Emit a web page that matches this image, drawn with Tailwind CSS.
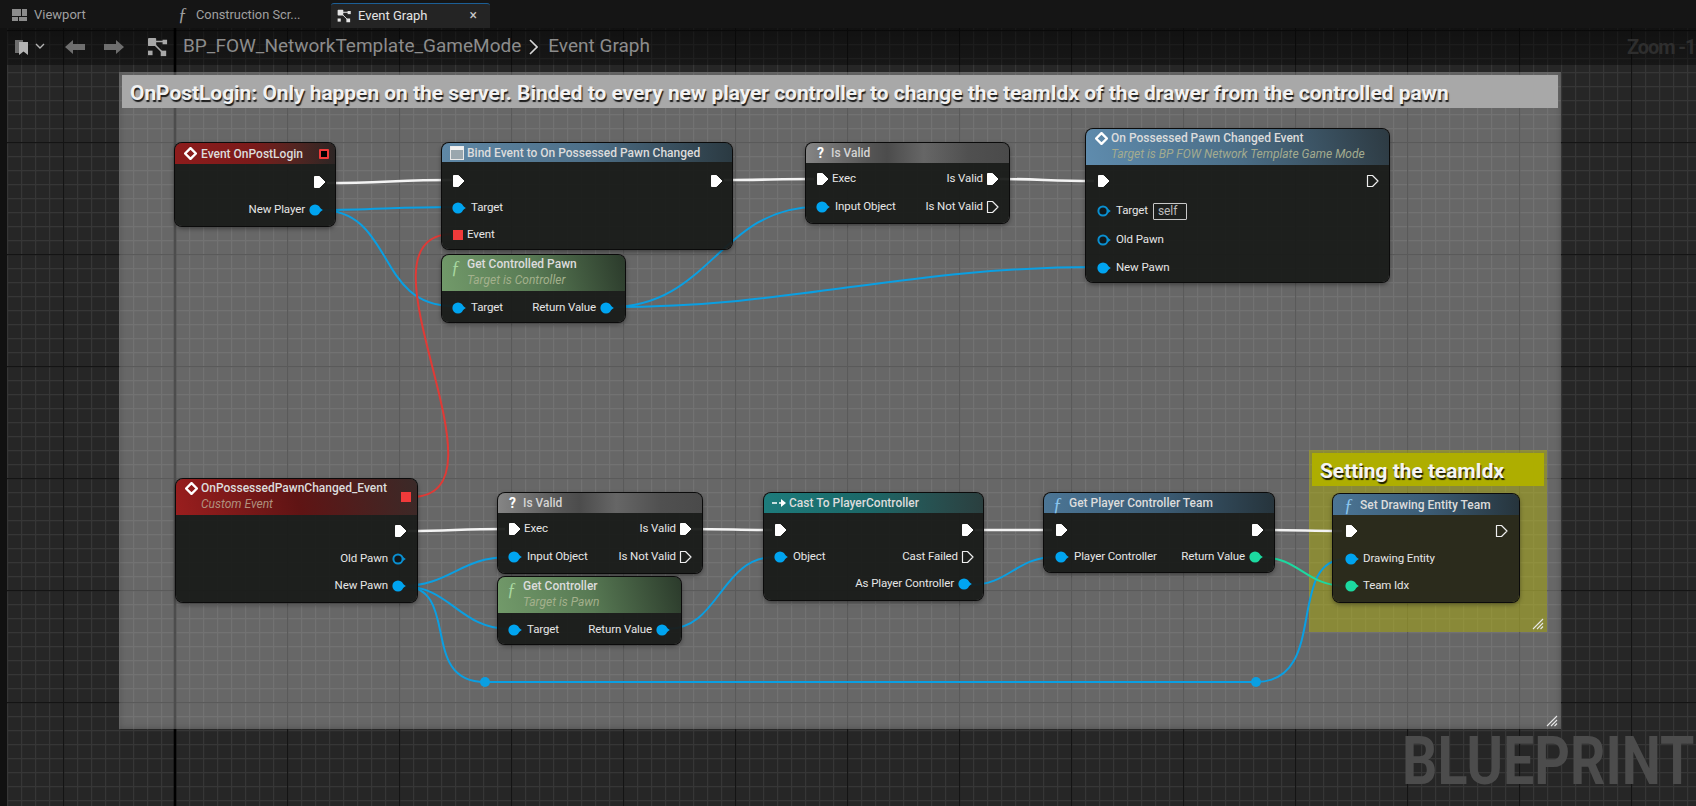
<!DOCTYPE html>
<html lang="en">
<head>
  <meta charset="UTF-8">
  <title>Event Graph</title>
  <script src="https://cdn.jsdelivr.net/npm/@tailwindcss/browser@4"></script>
</head>
<body class="bg-[#151515]">
<svg class="hidden">
  <symbol id="exec" viewBox="0 0 14 14"><path d="M1.5 1.5H6.5L12 7L6.5 12.5H1.5Z" fill="#fff" stroke="#fff" stroke-linejoin="round"/></symbol>
  <symbol id="exec-o" viewBox="0 0 14 14"><path d="M1.5 1.5H6.5L12 7L6.5 12.5H1.5Z" fill="none" stroke="#eee" stroke-width="1.2" stroke-linejoin="round"/></symbol>
  <symbol id="pin" viewBox="0 0 14 14"><circle cx="6" cy="7" r="5.6" fill="#00a4f0"/><path d="M11 5L13.8 7L11 9Z" fill="#00a4f0"/></symbol>
  <symbol id="pin-o" viewBox="0 0 14 14"><circle cx="6" cy="7" r="4.6" fill="#10181c" stroke="#0a8fd0" stroke-width="2"/><path d="M11 5L13.8 7L11 9Z" fill="#0a8fd0"/></symbol>
  <symbol id="pin-g" viewBox="0 0 14 14"><circle cx="6" cy="7" r="5.6" fill="#1cd9a0"/><path d="M11 5L13.8 7L11 9Z" fill="#1cd9a0"/></symbol>
  <symbol id="diamond" viewBox="0 0 14 14"><path d="M7 1.2L12.8 7L7 12.8L1.2 7Z" fill="none" stroke="#fff" stroke-width="2.6"/></symbol>
  <symbol id="graph" viewBox="0 0 24 22"><path d="M6 5L19 5M7 7L17 17" stroke="currentColor" stroke-width="1.6"/><rect x="1" y="1" width="9" height="9" rx="1" fill="currentColor"/><rect x="17" y="3" width="5" height="5" fill="currentColor"/><rect x="1" y="15" width="5" height="5" fill="currentColor"/><rect x="15" y="15" width="6" height="6" fill="currentColor"/></symbol>
  <symbol id="hatch" viewBox="0 0 12 12"><path d="M1 11L11 1M5 11L11 5M8.5 11L11 8.5" stroke="#e8e8e8" stroke-width="1.1"/></symbol>
</svg>

<div class="relative w-[1696px] h-[806px] overflow-hidden font-['Roboto',sans-serif]">

  <!-- graph canvas -->
  <div class="absolute inset-0">
    <svg class="absolute inset-0" width="1696" height="806">
      <defs>
        <pattern id="minor" x="7" y="2" width="14" height="14" patternUnits="userSpaceOnUse">
          <path d="M0 0V14M0 0H14" stroke="#363636" stroke-width="2.4" fill="none"/>
        </pattern>
        <pattern id="major" x="63" y="30" width="112" height="112" patternUnits="userSpaceOnUse">
          <path d="M0 0V112M0 0H112" stroke="#141414" stroke-width="2.4" fill="none"/>
        </pattern>
      </defs>
      <rect width="1696" height="806" fill="#262626"/>
      <rect width="1696" height="806" fill="url(#minor)"/>
      <rect width="1696" height="806" fill="url(#major)"/>
      <path d="M175 28V806" stroke="#000" stroke-width="2.6"/>
    </svg>

    <div class="absolute left-0 top-0 w-[7px] h-full bg-[#111111]"></div>

    <!-- comment boxes -->
    <div class="absolute left-[119px] top-[72px] w-[1442px] h-[657px] bg-white/30 shadow-[inset_0_0_6px_rgba(0,0,0,0.25)]">
      <div class="mx-[3px] mt-[3px] h-[33px] flex items-center pl-[8px] pt-[3px] bg-[#a8a8a8] text-[#f2f2f2] font-bold text-[20.9px] leading-none [text-shadow:1px_2px_1px_rgba(0,0,0,0.85)] whitespace-nowrap">OnPostLogin: Only happen on the server. Binded to every new player controller to change the teamIdx of the drawer from the controlled pawn</div>
      <svg class="absolute right-[3px] bottom-[2px] w-[12px] h-[12px]"><use href="#hatch"/></svg>
    </div>
    <div class="absolute left-[1309px] top-[450px] w-[238px] h-[182px] bg-[#b4b400]/45">
      <div class="mx-[3px] mt-[3px] h-[33px] flex items-center pl-[8px] pt-[3px] bg-[#aeae00] text-[#f4f4f4] font-bold text-[20.9px] leading-none [text-shadow:1px_2px_1px_rgba(0,0,0,0.85)] whitespace-nowrap">Setting the teamIdx</div>
      <svg class="absolute right-[3px] bottom-[2px] w-[12px] h-[12px]"><use href="#hatch"/></svg>
    </div>

    <div class="absolute left-[1402px] top-[729px] text-[66px] leading-none font-bold text-[#4c4c4c] origin-left scale-x-[0.84] whitespace-nowrap">BLUEPRINT</div>

    <!-- wires -->
    <svg class="absolute inset-0" width="1696" height="806" fill="none">
      <g stroke="#f4f4f4" stroke-width="2.6">
        <path d="M327 183C380 183 400 180 452 180"/>
        <path d="M724 180C760 180 780 179 814 179"/>
        <path d="M1000 179C1040 179 1050 181 1094 181"/>
        <path d="M408 531C450 531 460 529 505 529"/>
        <path d="M690 529C725 529 740 530 772 530"/>
        <path d="M975 530C1010 530 1020 530 1052 530"/>
        <path d="M1265 530C1300 530 1310 531 1342 531"/>
      </g>
      <g stroke="#0a9fe2" stroke-width="2">
        <path d="M320 210C370 210 400 207 453 207"/>
        <path d="M320 210C395 210 375 306 453 306"/>
        <path d="M611 307C710 307 720 207 817 207"/>
        <path d="M611 307C800 307 900 267 1098 267"/>
        <path d="M402 586C450 586 460 557 509 557"/>
        <path d="M402 586C450 586 460 629 509 629"/>
        <path d="M402 586C462 586 418 682 485 682"/>
        <path d="M485 682H1256"/>
        <path d="M1256 682C1330 682 1285 559 1346 559"/>
        <path d="M667 629C720 629 720 557 775 557"/>
        <path d="M969 585C1010 585 1015 557 1056 557"/>
      </g>
      <path d="M411 497C520 497 344 234 453 234" stroke="#e03a36" stroke-width="2"/>
      <path d="M1260 557C1300 557 1305 586 1346 586" stroke="#1cd9a0" stroke-width="2"/>
      <circle cx="485" cy="682" r="5" fill="#0a9fe2"/>
      <circle cx="1256" cy="682" r="5" fill="#0a9fe2"/>
    </svg>

    <!-- nodes -->
    <div class="absolute left-[175px] top-[143px] w-[160px] h-[83px] rounded-[7px] overflow-hidden bg-[#191b19]/95 shadow-[0_0_0_1px_#0b0b0b,0_2px_5px_rgba(0,0,0,0.5)] text-[11.5px] tracking-[-0.1px] text-[#e6e6e6]">
      <div class="h-[21px] flex items-center pl-[9px] pr-[6px] text-[12px] tracking-normal bg-linear-to-r from-[#8e1c1c] via-[#7a1a1a] to-[#2c2524]">
        <svg class="w-[13px] h-[13px]"><use href="#diamond"/></svg>
        <span class="ml-[4px] font-medium text-[#dcdcdc]">Event OnPostLogin</span>
        <span class="ml-auto w-[10px] h-[10px] bg-black border-2 border-[#f03a3a] rounded-[1px]"></span>
      </div>
      <div class="pt-[4px]">
        <div class="h-[28px] flex items-center justify-end pr-[8px]"><svg class="w-[14px] h-[14px]"><use href="#exec"/></svg></div>
        <div class="h-[28px] flex items-center justify-end gap-[4px] pr-[12px]"><span>New Player</span><svg class="w-[14px] h-[14px]"><use href="#pin"/></svg></div>
      </div>
    </div>

    <div class="absolute left-[442px] top-[143px] w-[290px] h-[106px] rounded-[7px] overflow-hidden bg-[#191b19]/95 shadow-[0_0_0_1px_#0b0b0b,0_2px_5px_rgba(0,0,0,0.5)] text-[11.5px] tracking-[-0.1px] text-[#e6e6e6]">
      <div class="h-[19px] flex items-center pl-[8px] text-[12px] tracking-normal bg-linear-to-r from-[#5f88a6] via-[#4d6f88] to-[#2b3a42]">
        <svg class="w-[14px] h-[14px]" viewBox="0 0 14 14"><rect x="0.5" y="0.5" width="13" height="13" fill="#9aa7ae" stroke="#e8e8e8"/><rect x="0.5" y="0.5" width="13" height="3.5" fill="#f2f2f2"/></svg>
        <span class="ml-[3px] font-medium text-[#dcdcdc]">Bind Event to On Possessed Pawn Changed</span>
      </div>
      <div class="pt-[5px]">
        <div class="h-[27px] flex items-center justify-between pl-[10px] pr-[8px]"><svg class="w-[14px] h-[14px]"><use href="#exec"/></svg><svg class="w-[14px] h-[14px]"><use href="#exec"/></svg></div>
        <div class="h-[27px] flex items-center gap-[5px] pl-[10px]"><svg class="w-[14px] h-[14px]"><use href="#pin"/></svg><span>Target</span></div>
        <div class="h-[27px] flex items-center gap-[4px] pl-[11px]"><span class="w-[10px] h-[10px] bg-[#f03a3a]"></span><span>Event</span></div>
      </div>
    </div>

    <div class="absolute left-[442px] top-[255px] w-[183px] h-[67px] rounded-[7px] overflow-hidden bg-[#191b19]/95 shadow-[0_0_0_1px_#0b0b0b,0_2px_5px_rgba(0,0,0,0.5)] text-[11.5px] tracking-[-0.1px] text-[#e6e6e6]">
      <div class="relative h-[36px] pl-[25px] pt-[2px] text-[12px] tracking-normal bg-linear-[75deg] from-[#729a6a] via-[#587a54] to-[#2b3a2b]">
        <span class="absolute left-[9px] top-[0px] text-[18px] italic font-['Liberation_Serif',serif] text-[#a8d8a0]">ƒ</span>
        <div class="font-medium leading-[15px] text-[#dcdcdc]">Get Controlled Pawn</div>
        <div class="italic leading-[17px] text-[#a3b08c]">Target is Controller</div>
      </div>
      <div class="pt-[3px]">
        <div class="h-[27px] flex items-center justify-between pl-[10px] pr-[11px]">
          <span class="flex items-center gap-[5px]"><svg class="w-[14px] h-[14px]"><use href="#pin"/></svg>Target</span>
          <span class="flex items-center gap-[4px]">Return Value<svg class="w-[14px] h-[14px]"><use href="#pin"/></svg></span>
        </div>
      </div>
    </div>

    <div class="absolute left-[806px] top-[143px] w-[203px] h-[80px] rounded-[7px] overflow-hidden bg-[#191b19]/95 shadow-[0_0_0_1px_#0b0b0b,0_2px_5px_rgba(0,0,0,0.5)] text-[11.5px] tracking-[-0.1px] text-[#e6e6e6]">
      <div class="h-[20px] flex items-center pl-[11px] text-[12px] tracking-normal bg-[linear-gradient(to_right,#858585,#565656_30%,#4c4c4c_40%,#666666_58%,#505050_80%,#4a4a4a)]">
        <span class="font-bold text-[14px] text-white w-[14px]">?</span><span class="font-medium text-[#d4d4d4]">Is Valid</span>
      </div>
      <div class="pt-[2px]">
        <div class="h-[28px] flex items-center justify-between pl-[10px] pr-[9px]">
          <span class="flex items-center gap-[2px]"><svg class="w-[14px] h-[14px]"><use href="#exec"/></svg>Exec</span>
          <span class="flex items-center gap-[3px]">Is Valid<svg class="w-[14px] h-[14px]"><use href="#exec"/></svg></span>
        </div>
        <div class="h-[28px] flex items-center justify-between pl-[10px] pr-[9px]">
          <span class="flex items-center gap-[5px]"><svg class="w-[14px] h-[14px]"><use href="#pin"/></svg>Input Object</span>
          <span class="flex items-center gap-[3px]">Is Not Valid<svg class="w-[14px] h-[14px]"><use href="#exec-o"/></svg></span>
        </div>
      </div>
    </div>

    <div class="absolute left-[1086px] top-[129px] w-[303px] h-[153px] rounded-[7px] overflow-hidden bg-[#191b19]/95 shadow-[0_0_0_1px_#0b0b0b,0_2px_5px_rgba(0,0,0,0.5)] text-[11.5px] tracking-[-0.1px] text-[#e6e6e6]">
      <div class="relative h-[36px] pl-[25px] pt-[2px] text-[12px] tracking-normal bg-linear-[75deg] from-[#5f8cae] via-[#4a6d86] to-[#2d3a42]">
        <svg class="absolute left-[9px] top-[3px] w-[13px] h-[13px]"><use href="#diamond"/></svg>
        <div class="font-medium leading-[15px] text-[#dcdcdc]">On Possessed Pawn Changed Event</div>
        <div class="italic leading-[17px] text-[#a3ab8f]">Target is BP FOW Network Template Game Mode</div>
      </div>
      <div class="h-[32px] flex items-center justify-between pl-[11px] pr-[9px]"><svg class="w-[14px] h-[14px]"><use href="#exec"/></svg><svg class="w-[14px] h-[14px]"><use href="#exec-o"/></svg></div>
      <div class="h-[28px] flex items-center gap-[5px] pl-[11px]"><svg class="w-[14px] h-[14px]"><use href="#pin-o"/></svg><span>Target</span><span class="w-[34px] h-[17px] border border-[#c8c8c8] rounded-[1px] pl-[4px] leading-[15px] text-[12px] text-[#bdbdbd]">self</span></div>
      <div class="h-[29px] flex items-center gap-[5px] pl-[11px]"><svg class="w-[14px] h-[14px]"><use href="#pin-o"/></svg><span>Old Pawn</span></div>
      <div class="h-[27px] flex items-center gap-[5px] pl-[11px]"><svg class="w-[14px] h-[14px]"><use href="#pin"/></svg><span>New Pawn</span></div>
    </div>

    <div class="absolute left-[176px] top-[479px] w-[241px] h-[123px] rounded-[7px] overflow-hidden bg-[#191b19]/95 shadow-[0_0_0_1px_#0b0b0b,0_2px_5px_rgba(0,0,0,0.5)] text-[11.5px] tracking-[-0.1px] text-[#e6e6e6]">
      <div class="relative h-[36px] pl-[25px] pt-[2px] text-[12px] tracking-normal bg-linear-[75deg] from-[#9a1e1e] via-[#5f1414] to-[#3a2a28]">
        <svg class="absolute left-[9px] top-[3px] w-[13px] h-[13px]"><use href="#diamond"/></svg>
        <div class="font-medium leading-[15px] text-[#dcdcdc]">OnPossessedPawnChanged_Event</div>
        <div class="italic leading-[17px] text-[#b0917f]">Custom Event</div>
        <span class="absolute right-[6px] top-[13px] w-[10px] h-[10px] bg-[#f03a3a]"></span>
      </div>
      <div class="h-[32px] flex items-center justify-end pr-[9px]"><svg class="w-[14px] h-[14px]"><use href="#exec"/></svg></div>
      <div class="h-[24px] flex items-center justify-end gap-[4px] pr-[11px]"><span>Old Pawn</span><svg class="w-[14px] h-[14px]"><use href="#pin-o"/></svg></div>
      <div class="h-[30px] flex items-center justify-end gap-[4px] pr-[11px]"><span>New Pawn</span><svg class="w-[14px] h-[14px]"><use href="#pin"/></svg></div>
    </div>

    <div class="absolute left-[498px] top-[493px] w-[204px] h-[80px] rounded-[7px] overflow-hidden bg-[#191b19]/95 shadow-[0_0_0_1px_#0b0b0b,0_2px_5px_rgba(0,0,0,0.5)] text-[11.5px] tracking-[-0.1px] text-[#e6e6e6]">
      <div class="h-[20px] flex items-center pl-[11px] text-[12px] tracking-normal bg-[linear-gradient(to_right,#858585,#565656_30%,#4c4c4c_40%,#666666_58%,#505050_80%,#4a4a4a)]">
        <span class="font-bold text-[14px] text-white w-[14px]">?</span><span class="font-medium text-[#d4d4d4]">Is Valid</span>
      </div>
      <div class="pt-[2px]">
        <div class="h-[28px] flex items-center justify-between pl-[10px] pr-[9px]">
          <span class="flex items-center gap-[2px]"><svg class="w-[14px] h-[14px]"><use href="#exec"/></svg>Exec</span>
          <span class="flex items-center gap-[3px]">Is Valid<svg class="w-[14px] h-[14px]"><use href="#exec"/></svg></span>
        </div>
        <div class="h-[28px] flex items-center justify-between pl-[10px] pr-[9px]">
          <span class="flex items-center gap-[5px]"><svg class="w-[14px] h-[14px]"><use href="#pin"/></svg>Input Object</span>
          <span class="flex items-center gap-[3px]">Is Not Valid<svg class="w-[14px] h-[14px]"><use href="#exec-o"/></svg></span>
        </div>
      </div>
    </div>

    <div class="absolute left-[498px] top-[577px] w-[183px] h-[67px] rounded-[7px] overflow-hidden bg-[#191b19]/95 shadow-[0_0_0_1px_#0b0b0b,0_2px_5px_rgba(0,0,0,0.5)] text-[11.5px] tracking-[-0.1px] text-[#e6e6e6]">
      <div class="relative h-[36px] pl-[25px] pt-[2px] text-[12px] tracking-normal bg-linear-[75deg] from-[#729a6a] via-[#587a54] to-[#2b3a2b]">
        <span class="absolute left-[9px] top-[0px] text-[18px] italic font-['Liberation_Serif',serif] text-[#a8d8a0]">ƒ</span>
        <div class="font-medium leading-[15px] text-[#dcdcdc]">Get Controller</div>
        <div class="italic leading-[17px] text-[#a3b08c]">Target is Pawn</div>
      </div>
      <div class="pt-[3px]">
        <div class="h-[27px] flex items-center justify-between pl-[10px] pr-[11px]">
          <span class="flex items-center gap-[5px]"><svg class="w-[14px] h-[14px]"><use href="#pin"/></svg>Target</span>
          <span class="flex items-center gap-[4px]">Return Value<svg class="w-[14px] h-[14px]"><use href="#pin"/></svg></span>
        </div>
      </div>
    </div>

    <div class="absolute left-[764px] top-[493px] w-[219px] h-[107px] rounded-[7px] overflow-hidden bg-[#191b19]/95 shadow-[0_0_0_1px_#0b0b0b,0_2px_5px_rgba(0,0,0,0.5)] text-[11.5px] tracking-[-0.1px] text-[#e6e6e6]">
      <div class="h-[20px] flex items-center pl-[8px] text-[12px] tracking-normal bg-linear-to-r from-[#1d7c7c] via-[#1b6666] to-[#2a3f3f]">
        <svg class="w-[15px] h-[10px]" viewBox="0 0 15 10"><path d="M0 5H5M7 5H9" stroke="#fff" stroke-width="1.4"/><path d="M9 1L14 5L9 9Z" fill="#fff"/></svg>
        <span class="ml-[2px] font-medium text-[#dcdcdc]">Cast To PlayerController</span>
      </div>
      <div class="pt-[3px]">
        <div class="h-[27px] flex items-center justify-between pl-[10px] pr-[8px]"><svg class="w-[14px] h-[14px]"><use href="#exec"/></svg><svg class="w-[14px] h-[14px]"><use href="#exec"/></svg></div>
        <div class="h-[27px] flex items-center justify-between pl-[10px] pr-[8px]">
          <span class="flex items-center gap-[5px]"><svg class="w-[14px] h-[14px]"><use href="#pin"/></svg>Object</span>
          <span class="flex items-center gap-[3px]">Cast Failed<svg class="w-[14px] h-[14px]"><use href="#exec-o"/></svg></span>
        </div>
        <div class="h-[28px] flex items-center justify-end gap-[4px] pr-[11px]"><span>As Player Controller</span><svg class="w-[14px] h-[14px]"><use href="#pin"/></svg></div>
      </div>
    </div>

    <div class="absolute left-[1044px] top-[493px] w-[230px] h-[79px] rounded-[7px] overflow-hidden bg-[#191b19]/95 shadow-[0_0_0_1px_#0b0b0b,0_2px_5px_rgba(0,0,0,0.5)] text-[11.5px] tracking-[-0.1px] text-[#e6e6e6]">
      <div class="relative h-[20px] flex items-center pl-[25px] text-[12px] tracking-normal bg-linear-to-r from-[#4b7595] via-[#3c5d76] to-[#26343c]">
        <span class="absolute left-[9px] top-[-1px] text-[18px] italic font-['Liberation_Serif',serif] text-[#8cc8f0]">ƒ</span>
        <span class="font-medium text-[#dcdcdc]">Get Player Controller Team</span>
      </div>
      <div class="pt-[3px]">
        <div class="h-[27px] flex items-center justify-between pl-[11px] pr-[9px]"><svg class="w-[14px] h-[14px]"><use href="#exec"/></svg><svg class="w-[14px] h-[14px]"><use href="#exec"/></svg></div>
        <div class="h-[27px] flex items-center justify-between pl-[11px] pr-[11px]">
          <span class="flex items-center gap-[5px]"><svg class="w-[14px] h-[14px]"><use href="#pin"/></svg>Player Controller</span>
          <span class="flex items-center gap-[4px]">Return Value<svg class="w-[14px] h-[14px]"><use href="#pin-g"/></svg></span>
        </div>
      </div>
    </div>

    <div class="absolute left-[1333px] top-[494px] w-[186px] h-[108px] rounded-[7px] overflow-hidden bg-[#26261a]/95 shadow-[0_0_0_1px_#0b0b0b,0_2px_5px_rgba(0,0,0,0.5)] text-[11.5px] tracking-[-0.1px] text-[#e6e6e6]">
      <div class="relative h-[21px] flex items-center pl-[27px] text-[12px] tracking-normal bg-linear-to-r from-[#4b7595] via-[#3c5d76] to-[#26343c]">
        <span class="absolute left-[11px] top-[-1px] text-[18px] italic font-['Liberation_Serif',serif] text-[#8cc8f0]">ƒ</span>
        <span class="font-medium text-[#dcdcdc]">Set Drawing Entity Team</span>
      </div>
      <div class="h-[32px] flex items-center justify-between pl-[12px] pr-[10px]"><svg class="w-[14px] h-[14px]"><use href="#exec"/></svg><svg class="w-[14px] h-[14px]"><use href="#exec-o"/></svg></div>
      <div class="h-[24px] flex items-center gap-[4px] pl-[12px]"><svg class="w-[14px] h-[14px]"><use href="#pin"/></svg><span>Drawing Entity</span></div>
      <div class="h-[30px] flex items-center gap-[4px] pl-[12px]"><svg class="w-[14px] h-[14px]"><use href="#pin-g"/></svg><span>Team Idx</span></div>
    </div>
  </div>

  <!-- tab bar -->
  <div class="relative h-[28px] flex items-end pl-[12px] bg-[#151515] text-[13px] text-[#a0a0a0]">
    <div class="w-[166px] h-[25px] pb-[1px] flex items-center gap-[7px]">
      <svg class="w-[15px] h-[12px]" viewBox="0 0 15 12" fill="#8c8c8c"><rect width="9" height="7"/><rect x="10" width="5" height="7"/><rect y="8" width="6" height="4"/><rect x="7" y="8" width="8" height="4"/></svg>
      <span>Viewport</span>
    </div>
    <div class="w-[153px] h-[25px] pb-[1px] flex items-center gap-[9px]">
      <span class="text-[18px] italic font-['Liberation_Serif',serif] text-[#a0a0a0]">ƒ</span>
      <span class="text-[12.8px]">Construction Scr...</span>
    </div>
    <div class="w-[159px] h-[25px] pb-[1px] flex items-center pl-[6px] bg-[#242424] rounded-t-[3px] border-t border-[#1c5f96] text-[#e4e4e4]">
      <svg class="w-[15px] h-[14px]"><use href="#graph"/></svg>
      <span class="ml-[6px]">Event Graph</span>
      <span class="ml-[42px] text-[#c8c8c8] text-[14px]">×</span>
    </div>
  </div>

  <!-- breadcrumb toolbar -->
  <div class="relative ml-[7px] h-[37px] flex items-center bg-linear-to-b from-black/55 to-black/40 text-[#8c8c8c] text-[19px]">
    <svg class="ml-[8px] w-[13px] h-[16px]" viewBox="0 0 13 16"><path d="M0 1H8V12L5 14H0Z" fill="#6e6e6e"/><path d="M4 3H13V16L8.5 12.5L4 16Z" fill="#b4b4b4"/></svg>
    <svg class="ml-[7px] w-[10px] h-[7px]" viewBox="0 0 10 7"><path d="M1 1L5 5L9 1" fill="none" stroke="#b4b4b4" stroke-width="1.4"/></svg>
    <svg class="ml-[20px] w-[20px] h-[14px]" viewBox="0 0 20 14" fill="#6e6e6e"><path d="M0 7L8 0V4H20V10H8V14Z"/></svg>
    <svg class="ml-[19px] w-[20px] h-[14px]" viewBox="0 0 20 14" fill="#6e6e6e"><path d="M20 7L12 0V4H0V10H12V14Z"/></svg>
    <svg class="ml-[23px] w-[22px] h-[20px] text-[#a8a8a8]"><use href="#graph"/></svg>
    <span class="ml-[14px]">BP_FOW_NetworkTemplate_GameMode</span>
    <svg class="ml-[8px] w-[9px] h-[16px]" viewBox="0 0 9 16"><path d="M1 1L8 8L1 15" fill="none" stroke="#d8d8d8" stroke-width="1.6"/></svg>
    <span class="ml-[10px]">Event Graph</span>
    <span class="absolute left-[1620px] top-[7px] font-bold text-[20px] leading-[24px] tracking-[-1.1px] text-[#2e2e2e] whitespace-nowrap">Zoom -1</span>
  </div>
</div>
</body>
</html>
